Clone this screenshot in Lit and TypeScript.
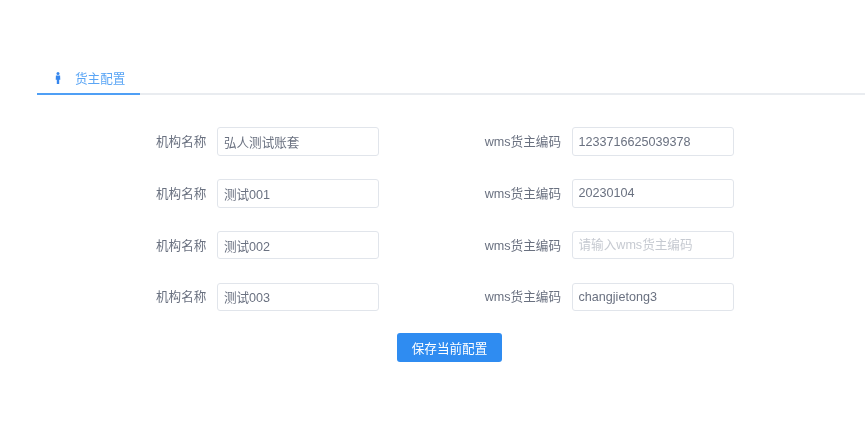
import { LitElement, html, css } from "lit";
import { customElement } from "lit/decorators.js";

const rows: [string, string, string][] = [
  ["弘人测试账套", "1233716625039378", ""],
  ["测试001", "20230104", ""],
  ["测试002", "", "请输入wms货主编码"],
  ["测试003", "changjietong3", ""],
];

@customElement("app-root")
export class AppRoot extends LitElement {
  static styles = css`
    :host {
      display: block;
      width: 865px;
      height: 435px;
      background: #fff;
      overflow: hidden;
      font-family: "Liberation Sans", "Noto Sans CJK SC", sans-serif;
      font-size: 12.6px;
    }
    .page { padding: 65px 0 0 37px; filter: blur(0.4px); }
    .tabs {
      display: flex;
      height: 28px;
      border-bottom: 2px solid #e9ecf0;
    }
    .tab {
      display: flex;
      align-items: center;
      width: 103px;
      height: 30px;
      margin-bottom: -2px;
      padding: 0 0 3px 16px;
      box-sizing: border-box;
      border-bottom: 2px solid #4f9ff5;
      color: #5aa5f5;
    }
    .tab svg { width: 10px; height: 12px; margin-right: 12px; flex: none; }
    .form {
      display: grid;
      grid-template-columns: 223px 250px;
      column-gap: 105px;
      row-gap: 23.25px;
      margin: 32.3px 0 0 119px;
    }
    .field { display: flex; align-items: center; gap: 11px; }
    .field label {
      flex: 1;
      padding-bottom: 2px;
      text-align: right;
      color: #6a7180;
      white-space: nowrap;
    }
    input {
      width: 162px;
      height: 28.5px;
      flex: none;
      box-sizing: border-box;
      padding: 0 5.5px;
      border: 1px solid #e1e5eb;
      border-radius: 3px;
      outline: none;
      font: inherit;
      color: #6a7180;
      background: #fff;
    }
    input::placeholder { color: #c6cad1; opacity: 1; }
    .actions { margin: 22.25px 0 0 360px; }
    button {
      display: block;
      width: 105px;
      height: 29px;
      padding: 0;
      border: none;
      border-radius: 3px;
      background: #2f8cf1;
      color: #fff;
      font: inherit;
    }
  `;

  render() {
    return html`<div class="page">
      <div class="tabs">
        <div class="tab">
          <svg viewBox="0 0 10 12" aria-hidden="true">
            <circle cx="5" cy="1.6" r="1.5" fill="#3586ee"></circle>
            <path d="M2.9 3.6h4.2l.2 4.2H6.2V12H3.8V7.8H2.7z" fill="#3586ee"></path>
          </svg>
          货主配置
        </div>
      </div>
      <div class="form">
        ${rows.map(
          ([name, code, ph]) => html`
            <div class="field"><label>机构名称</label><input .value=${name} /></div>
            <div class="field"><label>wms货主编码</label><input .value=${code} placeholder=${ph} /></div>
          `
        )}
      </div>
      <div class="actions"><button>保存当前配置</button></div>
    </div>`;
  }
}
